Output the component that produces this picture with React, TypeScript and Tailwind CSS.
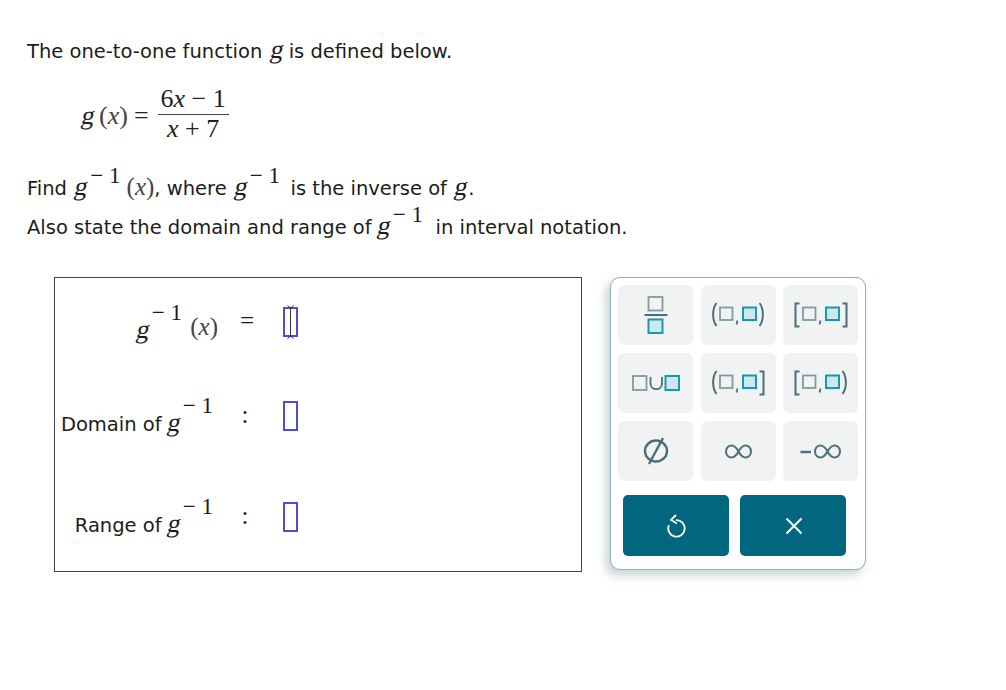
const TEXT = "font-['DejaVu_Sans','Verdana',sans-serif]";
const MATH = "font-['Liberation_Serif',serif]";

function G() {
    return <span className={`${MATH} inline-block -skew-x-12 text-[26px] leading-none`}>g</span>;
}

function Sup() {
    return <span className={`${MATH} inline-block ml-[2px] text-[23px] leading-none align-[12px] whitespace-pre`}>− 1</span>;
}

function TallSup() {
    return <span className={`${MATH} inline-block ml-[2px] text-[23px] leading-none align-[18px] whitespace-pre`}>− 1</span>;
}

function X() {
    return <span className={`${MATH} text-[25px] leading-none text-[#444]`}>(<i>x</i>)</span>;
}

function Slot({ cursor }: { cursor?: boolean }) {
    return (
        <div className="relative w-[15px] h-[30px] border-2 border-[#4d4ddb] flex justify-center">
            {cursor && (
                <svg className="absolute -top-[4px] left-[1px]" width="9" height="34" viewBox="0 0 9 34" fill="none" stroke="#333" strokeWidth="1">
                    <path d="M1.5 0.5L4.5 3L7.5 0.5M4.5 3V31M1.5 33.5L4.5 31L7.5 33.5" />
                </svg>
            )}
        </div>
    );
}

function Row({ label, op, cursor, mt, labelPad, opPad }: { label: React.ReactNode; op: string; cursor?: boolean; mt: string; labelPad: string; opPad: string }) {
    return (
        <div className={`grid grid-cols-[163px_58px_auto] h-[60px] items-center ${mt}`}>
            <div className={`text-right whitespace-pre ${labelPad}`}>{label}</div>
            <div className={`${MATH} text-center text-[25px] leading-none pb-[4px] ${opPad}`}>{op}</div>
            <div className="pl-[7px]"><Slot cursor={cursor} /></div>
        </div>
    );
}

const GRAY = "#7f9ba1";
const TEAL = "#1b98ad";
const DARK = "#4b6f7a";

function Interval({ open, close }: { open: string; close: string }) {
    return (
        <svg width="54" height="26" viewBox="0 0 54 26" fill="none">
            <path d={open === "(" ? "M5.5 1C1 7 1 18 5.5 24" : "M5.5 1.5H1.5V24.5H5.5"} stroke={DARK} strokeWidth="2" />
            <rect x="9" y="5.5" width="12.5" height="12.5" stroke={GRAY} strokeWidth="1.8" fill="#f1f3f3" />
            <path d="M26.5 18.5l-1 4" stroke={DARK} strokeWidth="1.8" />
            <rect x="32" y="5.5" width="13" height="12.5" stroke={TEAL} strokeWidth="2" fill="#cbe8ee" />
            <path d={close === ")" ? "M48.5 1C53 7 53 18 48.5 24" : "M48.5 1.5H52.5V24.5H48.5"} stroke={DARK} strokeWidth="2" />
        </svg>
    );
}

function Key({ children }: { children: React.ReactNode }) {
    return <button className="h-[60px] rounded-[6px] bg-[#f1f3f3] flex items-center justify-center">{children}</button>;
}

function Keypad() {
    return (
        <div className="w-[256px] h-[293px] ml-[28px] border border-[#8fadb3] rounded-[10px] bg-white shadow-[-4px_5px_10px_rgba(90,125,135,0.35)] px-[7px] pt-[7px]">
            <div className="grid grid-cols-[75px_75px_75px] gap-x-[7.5px] gap-y-[8px]">
                <Key>
                    <svg width="24" height="38" viewBox="0 0 24 38" fill="none">
                        <rect x="4.5" y="1" width="14" height="13.5" stroke={GRAY} strokeWidth="1.8" />
                        <path d="M0.5 19H23.5" stroke={DARK} strokeWidth="2" />
                        <rect x="4.5" y="23.5" width="14" height="13.5" stroke={TEAL} strokeWidth="2" fill="#cbe8ee" />
                    </svg>
                </Key>
                <Key><Interval open="(" close=")" /></Key>
                <Key><Interval open="[" close="]" /></Key>
                <Key>
                    <svg width="48" height="16" viewBox="0 0 48 16" fill="none">
                        <rect x="1" y="1" width="13.5" height="14" stroke={GRAY} strokeWidth="1.8" />
                        <path d="M18.5 2V8.5C18.5 16 30 16 30 8.5V2" stroke={DARK} strokeWidth="1.8" />
                        <rect x="33.5" y="1" width="13.5" height="14" stroke={TEAL} strokeWidth="2" fill="#cbe8ee" />
                    </svg>
                </Key>
                <Key><Interval open="(" close="]" /></Key>
                <Key><Interval open="[" close=")" /></Key>
                <Key>
                    <svg width="26" height="28" viewBox="0 0 26 28" fill="none" stroke={DARK} strokeWidth="2.4">
                        <ellipse cx="13" cy="14" rx="11" ry="10.5" />
                        <path d="M20 1L6 27" />
                    </svg>
                </Key>
                <Key>
                    <svg width="27" height="15" viewBox="0 0 27 15" fill="none" stroke={DARK} strokeWidth="2">
                        <path d="M13.5 7.5C11 3 9 1.5 6.5 1.5C3.5 1.5 1 4 1 7.5C1 11 3.5 13.5 6.5 13.5C9 13.5 11 12 13.5 7.5C16 3 18 1.5 20.5 1.5C23.5 1.5 26 4 26 7.5C26 11 23.5 13.5 20.5 13.5C18 13.5 16 12 13.5 7.5Z" />
                    </svg>
                </Key>
                <Key>
                    <svg width="41" height="15" viewBox="0 0 41 15" fill="none" stroke={DARK} strokeWidth="2">
                        <path d="M0.5 8H11" strokeWidth="2.4" />
                        <path d="M27.5 7.5C25 3 23 1.5 20.5 1.5C17.5 1.5 15 4 15 7.5C15 11 17.5 13.5 20.5 13.5C23 13.5 25 12 27.5 7.5C30 3 32 1.5 34.5 1.5C37.5 1.5 40 4 40 7.5C40 11 37.5 13.5 34.5 13.5C32 13.5 30 12 27.5 7.5Z" />
                    </svg>
                </Key>
            </div>
            <div className="flex gap-[11px] mt-[14px] pl-[5px]">
                <button className="w-[106px] h-[61px] rounded-[5px] bg-[#00677f] flex items-center justify-center">
                    <svg className="ml-[2px]" width="20" height="24" viewBox="0 0 20 24" fill="none" stroke="#fff" strokeWidth="1.8">
                        <path d="M9 6.2A8.2 8.2 0 1 1 2 11" />
                        <path d="M9 1L4 5.8L9.8 9.5" />
                    </svg>
                </button>
                <button className="w-[106px] h-[61px] rounded-[5px] bg-[#00677f] flex items-center justify-center">
                    <svg className="ml-[1px]" width="18" height="18" viewBox="0 0 18 18" fill="none" stroke="#fff" strokeWidth="2">
                        <path d="M1.5 1.5L16.5 16.5M16.5 1.5L1.5 16.5" />
                    </svg>
                </button>
            </div>
        </div>
    );
}

export default function App() {
    return (
        <main className={`${TEXT} w-[1006px] h-[690px] bg-white text-[#1c1c1c] text-[19.5px] overflow-hidden`}>
            <p className="h-[24px] mt-[37px] ml-[27px] leading-[24px]">
                The one-to-one function <span className="ml-[3px] -mr-[2px]"><G /></span> is defined below.
            </p>

            <div className={`${MATH} flex items-center ml-[82px] mt-[15px] h-[76px] text-[26px] text-[#222]`}>
                <span className="leading-none whitespace-pre pt-[4px]">
                    <span className="inline-block -skew-x-12">g</span>
                    <span className="ml-[4px] text-[#444]">(<i>x</i>)</span>
                    <span className="ml-[6px]">=</span>
                </span>
                <div className="ml-[9px] w-[71px] text-center leading-none">
                    <div className="pb-[2px] border-b border-[#444] whitespace-pre">6<i>x</i> − 1</div>
                    <div className="pt-[1px] whitespace-pre"><i>x</i> + 7</div>
                </div>
            </div>

            <p className="mt-[13px] ml-[27px] h-[38px] flex items-end whitespace-pre">
                <span>
                    Find <span className="ml-[2px]"><G /></span><Sup /> <X />, where <span className="ml-[2px]"><G /></span><Sup /><span className="-ml-[2px]">  is the inverse of </span><span className="ml-[2px]"><G /></span>.
                </span>
            </p>
            <p className="ml-[27px] h-[39px] flex items-end whitespace-pre">
                <span>Also state the domain and range of <G /><Sup />  in interval notation.</span>
            </p>

            <section className="flex mt-[35px] ml-[54px] items-start">
                <div className="w-[528px] h-[295px] border border-[#444] pt-[14px]">
                    <Row label={<span><G /><TallSup /><span className="ml-[2px]"> </span><span className="inline-block align-[3px]"><X /></span></span>} op="=" cursor mt="" labelPad="pt-[3px]" opPad="" />
                    <Row label={<span>Domain of <G /><TallSup /></span>} op=":" mt="mt-[34px]" labelPad="pt-[2px] pr-[5px]" opPad="pr-[4px]" />
                    <Row label={<span>Range of <G /><TallSup /></span>} op=":" mt="mt-[41px]" labelPad="pt-[2px] pr-[5px]" opPad="pr-[4px]" />
                </div>
                <Keypad />
            </section>
        </main>
    );
}
